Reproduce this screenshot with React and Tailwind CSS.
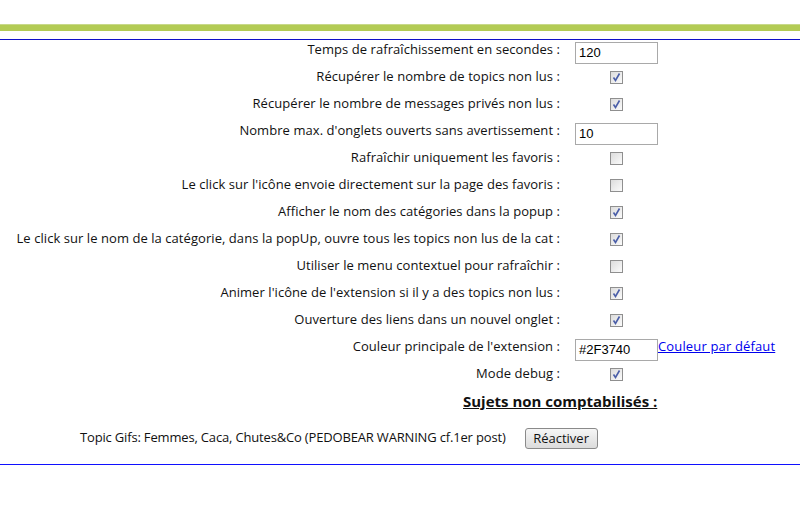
import React from "react";

const rows = [
  { label: "Temps de rafraîchissement en secondes :", type: "input", value: "120" },
  { label: "Récupérer le nombre de topics non lus :", type: "check", checked: true },
  { label: "Récupérer le nombre de messages privés non lus :", type: "check", checked: true },
  { label: "Nombre max. d'onglets ouverts sans avertissement :", type: "input", value: "10" },
  { label: "Rafraîchir uniquement les favoris :", type: "check", checked: false },
  { label: "Le click sur l'icône envoie directement sur la page des favoris :", type: "check", checked: false },
  { label: "Afficher le nom des catégories dans la popup :", type: "check", checked: true },
  { label: "Le click sur le nom de la catégorie, dans la popUp, ouvre tous les topics non lus de la cat :", type: "check", checked: true },
  { label: "Utiliser le menu contextuel pour rafraîchir :", type: "check", checked: false },
  { label: "Animer l'icône de l'extension si il y a des topics non lus :", type: "check", checked: true },
  { label: "Ouverture des liens dans un nouvel onglet :", type: "check", checked: true },
  { label: "Couleur principale de l'extension :", type: "color", value: "#2F3740" },
  { label: "Mode debug :", type: "check", checked: true },
];

function Check({ checked }) {
  return (
    <div className="mt-[3px] ml-[35px] w-[13px] h-[13px] border border-[#8f8f8f] bg-gradient-to-br from-[#dcdcdc] to-[#fbfbfb] flex items-center justify-center">
      {checked && (
        <svg width="11" height="11" viewBox="0 0 11 11">
          <path d="M2.5 5.5 L4.5 8.5 L8.5 1.5" fill="none" stroke="#4a5ea8" strokeWidth="1.6" />
        </svg>
      )}
    </div>
  );
}

function TextBox({ value }) {
  return (
    <div className="mt-px w-[83px] h-[22px] border border-[#a9a9a9] bg-white pl-[3px] flex items-center text-[13px] text-black" style={{ fontFamily: "'Liberation Sans', Arial, sans-serif" }}>
      {value}
    </div>
  );
}

export default function App() {
  return (
    <div className="w-[800px] h-[525px] bg-white text-[13px] text-[#111]" style={{ fontFamily: "'Open Sans', 'Noto Sans', sans-serif" }}>
      <div className="h-[24px]" />
      <div className="h-[7px] bg-[#b3cb55] border-t border-[#c8d98a]" />
      <div className="h-[8px]" />
      <div className="h-px bg-[#1010c8]" />
      <div className="pt-[1px]">
        {rows.map((r, i) => (
          <div key={i} className="grid grid-cols-[560px_1fr] gap-x-[15px] h-[27px]">
            <div className="text-right leading-[16px] whitespace-nowrap tracking-[0.06px]">{r.label}</div>
            <div className="flex items-start">
              {r.type === "check" && <Check checked={r.checked} />}
              {r.type === "input" && <TextBox value={r.value} />}
              {r.type === "color" && (
                <>
                  <TextBox value={r.value} />
                  <a href="#" className="text-[#0000ee] underline leading-[16px] text-[13px] tracking-[0.15px]">Couleur par défaut</a>
                </>
              )}
            </div>
          </div>
        ))}
      </div>
      <div className="flex h-[22px]">
        <div className="w-[463px]" />
        <div className="font-bold underline text-[15px] leading-[18px]">Sujets non comptabilisés :</div>
      </div>
      <div className="h-[13px]" />
      <div className="flex items-center h-[22px] pl-[80px]">
        <span className="tracking-[-0.17px]">Topic Gifs: Femmes, Caca, Chutes&amp;Co (PEDOBEAR WARNING cf.1er post)</span>
        <button className="ml-[19px] h-[21px] w-[73px] border border-[#8a8a8a] rounded-[3px] bg-gradient-to-b from-[#f6f6f6] to-[#dcdcdc] text-[13px] leading-[18px]">Réactiver</button>
      </div>
      <div className="h-[15px]" />
      <div className="h-px bg-[#1010ff]" />
    </div>
  );
}
